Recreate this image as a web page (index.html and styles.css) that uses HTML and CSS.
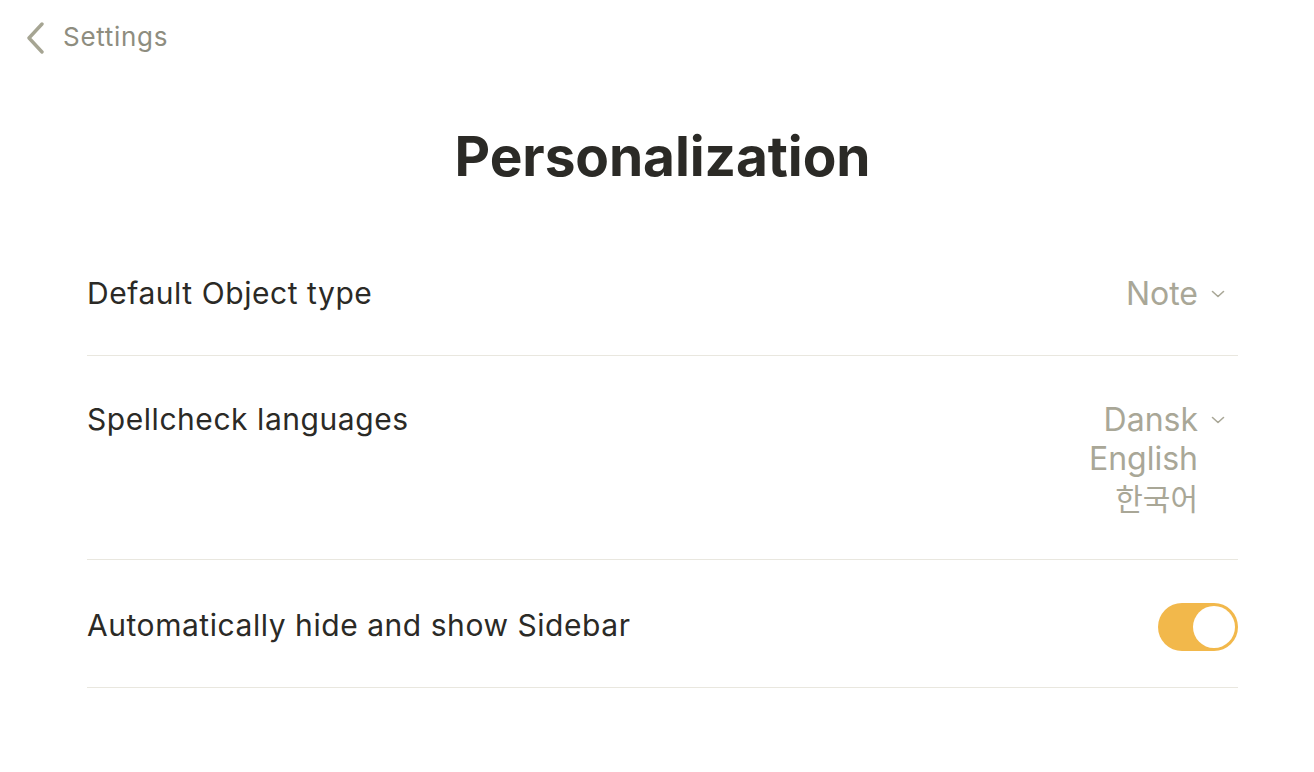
FILE: index.html
```html
<!DOCTYPE html>
<html lang="en">
<head>
<meta charset="utf-8">
<title>Personalization</title>
<link rel="stylesheet" href="styles.css">
</head>
<body>
<div class="page">
  <header class="topbar">
    <a class="back" href="#">
      <svg class="back-icon" width="20" height="32" viewBox="0 0 20 32" aria-hidden="true">
        <path d="M17 2 L4 16 L17 30" fill="none" stroke="currentColor" stroke-width="3.4" stroke-linecap="round" stroke-linejoin="round"/>
      </svg>
      <span>Settings</span>
    </a>
  </header>
  <main class="content">
    <h1 class="title">Personalization</h1>
    <section class="rows">
      <div class="row">
        <div class="label">Default Object type</div>
        <div class="value">
          <div class="value-line">Note<svg class="chev" width="14" height="8" viewBox="0 0 14 8"><path d="M1.5 1.5 L7 6.5 L12.5 1.5" fill="none" stroke="currentColor" stroke-width="1.6" stroke-linecap="round" stroke-linejoin="round"/></svg></div>
        </div>
      </div>
      <div class="row">
        <div class="label">Spellcheck languages</div>
        <div class="value">
          <div class="value-line">Dansk<svg class="chev" width="14" height="8" viewBox="0 0 14 8"><path d="M1.5 1.5 L7 6.5 L12.5 1.5" fill="none" stroke="currentColor" stroke-width="1.6" stroke-linecap="round" stroke-linejoin="round"/></svg></div>
          <div class="value-line">English<span class="chev-space"></span></div>
          <div class="value-line ko">한국어<span class="chev-space"></span></div>
        </div>
      </div>
      <div class="row row-toggle">
        <div class="label">Automatically hide and show Sidebar</div>
        <div class="toggle on"><span class="knob"></span></div>
      </div>
    </section>
  </main>
</div>
</body>
</html>
```
FILE: styles.css
```css
* { box-sizing: border-box; }
html, body { margin: 0; padding: 0; background: #ffffff; }
body {
  font-family: "Inter", "Noto Sans CJK KR", sans-serif;
  color: #2b2a26;
}
.page { width: 1314px; min-height: 772px; }
.topbar {
  padding: 20px 0 0 25px;
  height: 54px;
}
.back {
  display: inline-flex;
  align-items: center;
  gap: 18px;
  color: #a6a593;
  text-decoration: none;
  font-size: 26px;
  line-height: 34px;
  letter-spacing: 0.7px;
}
.back span { color: #8e8d7f; }
.back-icon { display: block; color: #a6a593; margin-top: 1px; }
.content {
  padding: 0 76px 0 87px;
}
.title {
  margin: 68px 0 40px;
  text-align: center;
  font-size: 55px;
  line-height: 68px;
  font-weight: 700;
  letter-spacing: -0.1px;
  color: #2b2a26;
}
.rows { display: flex; flex-direction: column; }
.row {
  display: flex;
  justify-content: space-between;
  align-items: flex-start;
  padding: 42px 0;
  border-bottom: 1px solid #e9e7df;
}
.row-toggle {
  align-items: center;
  padding: 45px 0 42px;
}
.label {
  color: #2b2a26;
  font-size: 30px;
  line-height: 40px;
  letter-spacing: 0.55px;
  padding-top: 1px;
}
.row-toggle .label { padding-top: 0; }
.value {
  display: flex;
  flex-direction: column;
  align-items: flex-end;
  padding: 2px 13px 0 0;
  color: #a9a797;
  font-size: 32px;
  line-height: 39px;
}
.value-line { display: flex; align-items: center; }
.chev { margin-left: 13px; color: #a9a797; display: block; }
.chev-space { display: inline-block; width: 27px; }
.ko { font-family: "Noto Sans CJK KR", "Inter", sans-serif; font-size: 30px; }
.toggle {
  width: 80px;
  height: 48px;
  margin: -2px 0 -6px;
  border-radius: 24px;
  background: #f2b84b;
  position: relative;
  flex-shrink: 0;
}
.knob {
  position: absolute;
  top: 3px;
  right: 3px;
  width: 42px;
  height: 42px;
  border-radius: 50%;
  background: #fff;
}
```
